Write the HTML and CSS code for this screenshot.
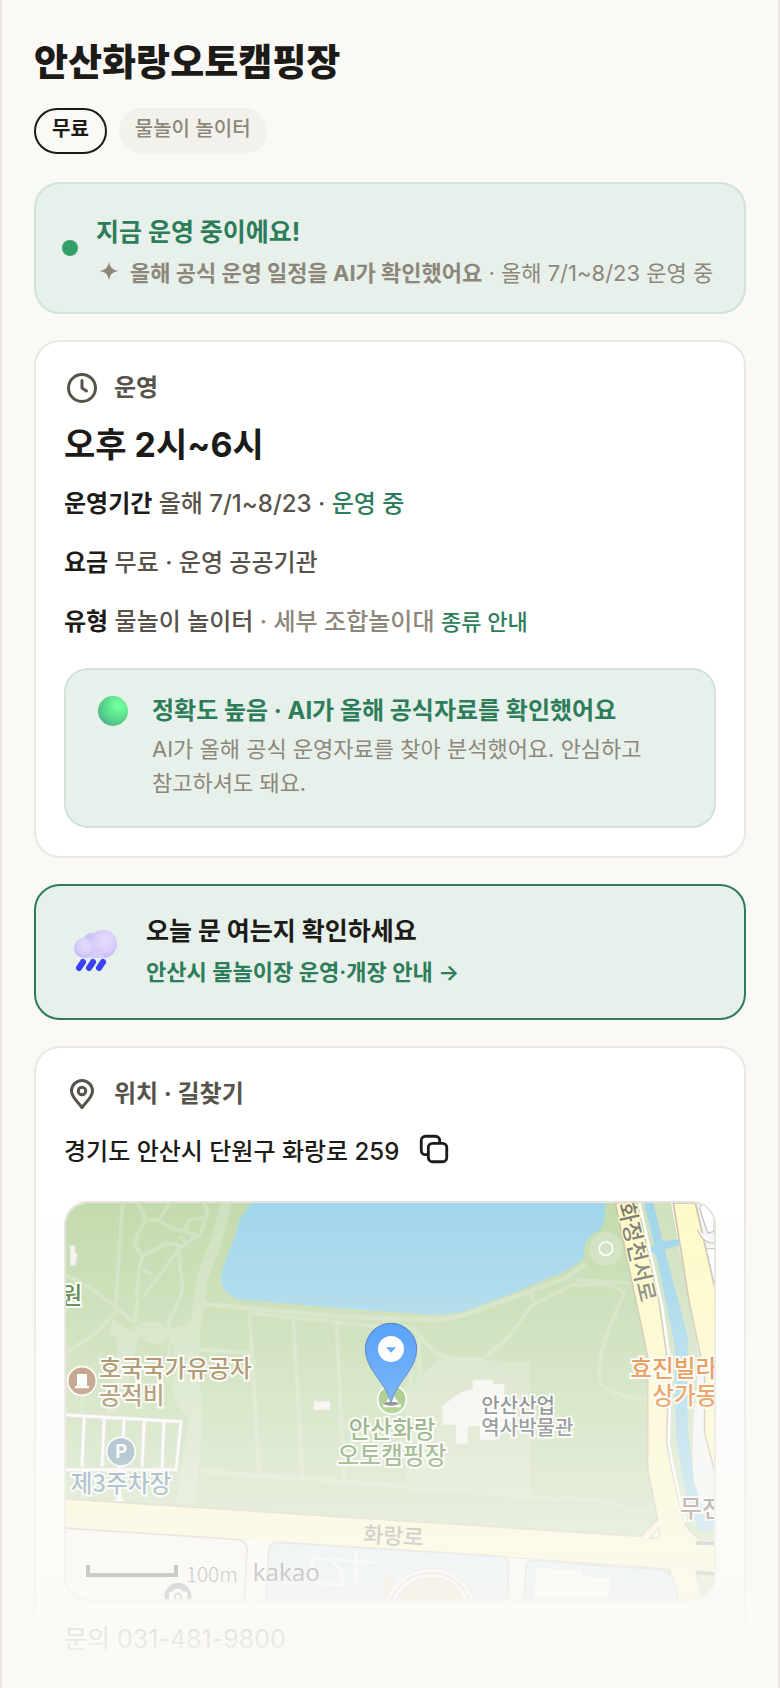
FILE: index.html
```html
<!DOCTYPE html>
<html lang="ko">
<head>
    <meta charset="UTF-8">
    <meta name="viewport" content="width=device-width, initial-scale=1.0">
    <title>안산화랑오토캠핑장</title>
    <link rel="stylesheet" href="styles.css">
</head>
<body>
<main class="page">
    <h1>안산화랑오토캠핑장</h1>
    <div class="tags">
        <span class="tag tag-free">무료</span>
        <span class="tag">물놀이 놀이터</span>
    </div>

    <section class="card status">
        <span class="dot"></span>
        <div class="status-text">
            <h2>지금 운영 중이에요!</h2>
            <p class="ai-line">
                <svg class="spark" viewBox="0 0 24 24"><path d="M12 2Q13 11 22 12Q13 13 12 22Q11 13 2 12Q11 11 12 2Z" fill="#8d877b"/></svg>
                <span><b>올해 공식 운영 일정을 AI가 확인했어요</b> · 올해 7/1~8/23 운영 중</span>
            </p>
        </div>
    </section>

    <section class="card">
        <h2 class="card-title">
            <svg class="icon" viewBox="0 0 24 24"><circle cx="12" cy="12" r="9"/><path d="M12 7v5l3 2"/></svg>
            운영
        </h2>
        <p class="hours">오후 2시~6시</p>
        <p class="row"><b>운영기간</b> 올해 7/1~8/23 · <span class="green">운영 중</span></p>
        <p class="row"><b>요금</b> 무료 · 운영 공공기관</p>
        <p class="row"><b>유형</b> 물놀이 놀이터 <span class="muted">· 세부 조합놀이대</span> <a class="kinds" href="#">종류 안내</a></p>

        <div class="accuracy">
            <span class="ball"></span>
            <div>
                <h3>정확도 높음 · AI가 올해 공식자료를 확인했어요</h3>
                <p>AI가 올해 공식 운영자료를 찾아 분석했어요. 안심하고 참고하셔도 돼요.</p>
            </div>
        </div>
    </section>

    <a class="card notice" href="#">
        <svg class="cloud" viewBox="0 0 48 48">
            <defs>
                <radialGradient id="puff" cx="55%" cy="40%" r="60%">
                    <stop offset="0" stop-color="#e6dcfb"/>
                    <stop offset=".6" stop-color="#d9d0fb"/>
                    <stop offset="1" stop-color="#c2b8f8"/>
                </radialGradient>
            </defs>
            <circle cx="19" cy="12" r="7" fill="#cbc2fa"/>
            <circle cx="31" cy="16" r="14" fill="url(#puff)"/>
            <path d="M12 20h20v10H12z" fill="#d6cdfb"/>
            <circle cx="12" cy="20" r="10" fill="url(#puff)"/>
            <g stroke="#3b41f8" stroke-width="6" stroke-linecap="round">
                <path d="M11 34l-4 6"/><path d="M21 34l-4 6"/><path d="M31 34l-4 6"/>
            </g>
        </svg>
        <span class="notice-text">
            <strong>오늘 문 여는지 확인하세요</strong>
            <span>안산시 물놀이장 운영·개장 안내 →</span>
        </span>
    </a>

    <section class="card location">
        <h2 class="card-title">
            <svg class="icon" viewBox="0 0 24 24"><path d="M12 21C9 17 5 14 5 10a7 7 0 0 1 14 0C19 14 15 17 12 21z"/><circle cx="12" cy="10" r="2.5"/></svg>
            위치 · 길찾기
        </h2>
        <div class="address">
            <span>경기도 안산시 단원구 화랑로 259</span>
            <button class="copy" type="button" aria-label="주소 복사">
                <svg viewBox="0 0 24 24"><rect x="8" y="8" width="13" height="13" rx="3"/><path d="M8 16H6a3 3 0 0 1-3-3V6a3 3 0 0 1 3-3h7a3 3 0 0 1 3 3v2"/></svg>
            </button>
        </div>

        <div class="map">
            <svg viewBox="0 0 1944 1188" preserveAspectRatio="xMidYMid slice">
                <rect width="1944" height="1188" fill="#c3dbae"/>

                <!-- park blocks and paths -->
                <path d="M1120 464L1392 480V880L1020 860V560Z" fill="#cfe0be"/>
                <path d="M140 345Q200 400 205 370Q255 335 300 372Q340 380 400 340V440Q400 520 410 640L390 900H330L370 640Q310 610 320 500Q330 430 310 405Q260 440 220 400L200 470Q190 560 150 630H120Q170 500 150 400H130Z" fill="#cfe1bf"/>
                <circle cx="1620" cy="137" r="50" fill="#cfe1bf"/>
                <g fill="none" stroke="#cfe1bf" stroke-width="12" stroke-linejoin="round">
                    <path d="M170 0L148 320"/>
                    <path d="M0 218Q70 240 198 355"/>
                    <path d="M0 450L90 390L150 325"/>
                    <path d="M215 0Q250 50 225 75Q190 120 230 160Q210 220 215 290L205 360"/>
                    <path d="M235 50H280L310 0M280 50Q300 75 355 85L370 50L420 45Q430 20 410 0M355 85L400 100L420 45M360 115L340 100M230 160L300 120Q340 120 340 135L400 95"/>
                    <path d="M345 130L230 285M230 200L260 215M340 135Q340 200 350 240Q350 280 310 350V380"/>
                    <path d="M320 400Q300 440 310 520M50 570L45 640" stroke-width="8"/>
                    <path d="M400 302L822 340L1120 352L1200 335L1500 225L1560 180" stroke-width="14"/>
                    <path d="M550 330L910 368L1040 372Q1100 460 1160 468H1250L1330 400L1400 305"/>
                    <path d="M1400 305L1520 245H1630L1675 268L1620 400Q1595 480 1600 530Q1620 585 1770 590M1395 270L1405 305M1530 230L1720 242"/>
                    <path d="M550 330L580 820M682 350L710 830M812 365L835 860"/>
                    <path d="M400 440L560 450M410 805L1020 850L1460 888Q1600 880 1690 920L1770 918"/>
                    <path d="M1035 440V840M1060 400V840"/>
                </g>
                <path d="M480 0Q460 100 410 220L385 400" fill="none" stroke="#cfe1bf" stroke-width="34"/>

                <!-- lake -->
                <path d="M557 0L520 50Q510 100 492 138L465 210Q458 270 522 290L822 316L1032 330Q1120 340 1182 328Q1340 275 1452 223Q1520 200 1554 163Q1550 100 1602 83Q1620 60 1617 0Z" fill="#a2d6eb"/>
                <circle cx="1620" cy="137" r="20" fill="#cfe1bf" stroke="#fff" stroke-width="5"/>

                <!-- parking lot and buildings -->
                <g fill="none" stroke="#e1dddc" stroke-width="13">
                    <path d="M0 636L345 656L330 800H0M55 640L48 790M115 645L108 790M174 648L168 790M235 650L228 790M294 655L288 795"/>
                </g>
                <g fill="none" stroke="#fff" stroke-width="7">
                    <path d="M0 636L345 656L330 800H0M55 640L48 790M115 645L108 790M174 648L168 790M235 650L228 790M294 655L288 795"/>
                </g>
                <path d="M12 128H28V150L35 155L28 188H12ZM743 594H793V621H743Z" fill="#f3f5f0" stroke="#ddd8d8" stroke-width="3"/>
                <path d="M1130 608L1180 570L1220 558V530H1282V543H1315V590L1340 615V650L1290 710H1242V670H1205V722H1170V665H1130Z" fill="#f3f6f0"/>

                <!-- riverside roads -->
                <path d="M1720 0L1810 440V700L1840 900L1900 980H1944V0Z" fill="#cfe1bf"/>
                <path d="M1815 0L1900 470L1880 680V860Q1900 960 1944 980V0Z" fill="#f6f5f5"/>
                <path d="M1735 0H1762L1790 115L1843 108V125L1796 140L1865 400V680L1885 840L1920 940L1944 950V985H1900L1860 880L1830 700L1825 420L1770 155L1745 140L1765 125Z" fill="#a0d5eb"/>
                <path d="M1822 0H1888L1950 270V820L1916 690V520L1870 300Z" fill="#fefac9" stroke="#cbc2ae" stroke-width="5"/>
                <path d="M1900 15L1925 90L1944 86V30L1910 0ZM1895 80Q1910 120 1944 120M1944 137H1920L1944 240" fill="#fff" stroke="#c8c3bd" stroke-width="4"/>
                <path d="M1648 0H1715L1780 300L1808 500L1802 720Q1830 870 1860 970L1900 1010H1950V1110H1890L1910 1194H1840L1810 1100L1700 1090L-6 975V887L1725 1000L1775 950L1745 800V460Z" fill="#fefac9" stroke="#cbc2ae" stroke-width="5"/>
                <path d="M1720 0L1788 310L1815 500L1808 720Q1830 850 1860 960" fill="none" stroke="#fff" stroke-width="8"/>
                <path d="M154 790H166V884L174 894H142L154 884Z" fill="#fff"/>

                <!-- blocks below the road -->
                <path d="M0 972L1700 1090V1188H0Z" fill="#fdfcfc"/>
                <path d="M-6 975L520 1010Q545 1020 543 1040L535 1194H-6Z" fill="#fbf9f9" stroke="#cbc2ae" stroke-width="5"/>
                <path d="M600 1194L608 1040Q612 1018 640 1018L1305 1060Q1328 1062 1328 1085L1324 1194Z" fill="#d9eaf5" stroke="#c7c6c4" stroke-width="5"/>
                <path d="M1374 1194L1380 1090Q1385 1068 1410 1072L1780 1100Q1815 1105 1825 1140L1840 1194Z" fill="#d9eaf5" stroke="#c7c6c4" stroke-width="5"/>
                <path d="M1410 1096L1548 1102V1120L1632 1126L1628 1188H1405Z" fill="#fff"/>
                <path d="M738 1065L795 1070L828 1105V1145L760 1142L735 1120ZM812 1070L924 1078M870 1045V1148" fill="none" stroke="#fff" stroke-width="7"/>
                <path d="M955 1188V1120H985V1150Q1030 1095 1100 1094Q1190 1100 1225 1188Z" fill="#edd5c8"/>
                <path d="M965 1188Q1010 1102 1098 1102Q1180 1104 1218 1188M985 1188Q1020 1118 1098 1118Q1170 1120 1200 1188" fill="none" stroke="#fff" stroke-width="7"/>
                <path d="M1752 1005L1778 975Q1785 1000 1776 1005Z" fill="#fff" stroke="#cbc2ae" stroke-width="4"/>
                <path d="M1890 1019L1944 1022M1890 1108L1944 1112" stroke="#999" stroke-width="11"/>

                <!-- place marks -->
                <g stroke="#fff" stroke-width="5">
                    <circle cx="48" cy="534" r="43" fill="#aa7d5c"/>
                    <circle cx="165" cy="746" r="43" fill="#7398ad"/>
                    <circle cx="336" cy="1180" r="43" fill="#66757d"/>
                    <circle cx="978" cy="590" r="43" fill="#83b658"/>
                </g>
                <path d="M33 513H63V549H69V556H27V549H33Z" fill="#fff"/>
                <path d="M310 1166H320L326 1158H346L352 1166H364V1188H310Z" fill="#fff"/>
                <circle cx="336" cy="1181" r="10" fill="none" stroke="#66757d" stroke-width="5"/>
                <path d="M978 570L1000 604H1004V613H952V604H956Z" fill="#fff"/>
                <ellipse cx="976" cy="602" rx="22" ry="6" fill="#555"/>
                <path d="M975 600Q966 565 930 518Q898 475 898 438A77 77 0 0 1 1052 438Q1052 475 1020 518Q984 565 975 600Z" fill="#2587fb" stroke="#2158b4" stroke-width="3"/>
                <circle cx="975" cy="438" r="39" fill="#fff"/>
                <path d="M960 433H990L975 449Z" fill="#2587fb"/>

                <g class="labels">
                    <text x="100" y="522" fill="#8c6d36">호국국가유공자</text>
                    <text x="100" y="602" fill="#8c6d36">공적비</text>
                    <text x="49" y="303" fill="#4c7a34" text-anchor="end">원</text>
                    <text x="978" y="705" fill="#52833c" text-anchor="middle">안산화랑</text>
                    <text x="978" y="783" fill="#52833c" text-anchor="middle">오토캠핑장</text>
                    <text class="small" x="1246" y="630" fill="#4d555c">안산산업</text>
                    <text class="small" x="1246" y="696" fill="#4d555c">역사박물관</text>
                    <text x="1693" y="522" fill="#e27518">효진빌라</text>
                    <text x="1759" y="602" fill="#e27518">상가동</text>
                    <text x="14" y="866" fill="#527f99">제3주차장</text>
                    <text x="1842" y="943" fill="#705448">무진</text>
                    <text class="parking" x="165" y="766" text-anchor="middle">P</text>
                </g>
                <g class="road-names">
                    <text x="890" y="1018" transform="rotate(3 890 1018)">화랑로</text>
                    <text x="1656" y="4" transform="rotate(77 1656 4)">화정천서로</text>
                </g>
                <path d="M66 1086V1116H330V1086" fill="none" stroke="#333" stroke-width="12"/>
                <text class="scale" x="360" y="1138">100m</text>
                <text class="brand" x="560" y="1133">kakao</text>
            </svg>
        </div>
        <p class="phone">문의 031-481-9800</p>
    </section>
    <div class="fade"></div>
</main>
</body>
</html>
```
FILE: styles.css
```css
* {
    box-sizing: border-box;
}

body {
    margin: 0;
    background: #faf9f5;
    color: #1c1b18;
    font-family: Inter, "Noto Sans CJK KR", sans-serif;
    font-size: 24px;
    line-height: 36px;
    word-break: keep-all;
}

h1, h2, h3, p {
    margin: 0;
}

a {
    color: inherit;
    text-decoration: none;
}

.page {
    position: relative;
    height: 100vh;
    overflow: hidden;
    padding: 37px 32px 0;
    border: solid #e9e7df;
    border-width: 0 2px;
}

h1 {
    font-size: 37px;
    font-weight: 800;
    line-height: 52px;
}

/* Tags */
.tags {
    display: flex;
    gap: 12px;
    margin: 19px 0 28px;
}

.tag {
    height: 46px;
    padding: 0 16px;
    border-radius: 23px;
    background: #f3f1ec;
    color: #8d877b;
    font-size: 20px;
    font-weight: 500;
    line-height: 42px;
}

.tag-free {
    border: 2px solid #1c1b18;
    background: transparent;
    color: #1c1b18;
    font-weight: 700;
    line-height: 38px;
}

/* Cards */
.card {
    display: block;
    margin-bottom: 26px;
    padding: 28px;
    border: 2px solid #eae8e1;
    border-radius: 26px;
    background: #fff;
}

.card-title {
    display: flex;
    align-items: center;
    gap: 14px;
    color: #57534a;
    font-size: 24px;
}

.icon {
    width: 36px;
    height: 36px;
    fill: none;
    stroke: #57534a;
    stroke-width: 2;
    stroke-linecap: round;
    stroke-linejoin: round;
}

/* Status */
.status {
    display: flex;
    align-items: center;
    gap: 18px;
    height: 132px;
    padding: 0 26px;
    border-color: #cfe4d8;
    background: #e7f0ea;
}

.status-text {
    padding-top: 10px;
}

.dot {
    width: 16px;
    height: 16px;
    border-radius: 50%;
    background: #359f6a;
}

.status h2 {
    color: #2d7d5a;
    font-size: 25px;
    line-height: 40px;
}

.ai-line {
    display: flex;
    gap: 10px;
    color: #8d877b;
    font-size: 22px;
    line-height: 42px;
    white-space: nowrap;
}

.spark {
    width: 22px;
    height: 22px;
    margin: 8px 0 0 2px;
}

/* Hours */
.hours {
    margin: 14px 0 16px;
    font-size: 34px;
    font-weight: 700;
    line-height: 50px;
}

.row {
    margin-bottom: 23px;
    color: #57534a;
    font-weight: 500;
}

.row b {
    color: #1c1b18;
    font-weight: 700;
}

.row .green,
.kinds {
    color: #2d7d5a;
}

.row .muted {
    color: #8d877b;
}

.kinds {
    font-size: 22px;
}

.accuracy {
    display: flex;
    gap: 24px;
    margin-top: 28px;
    padding: 20px 32px 26px;
    border: 2px solid #cfe4d8;
    border-radius: 24px;
    background: #e7f0ea;
}

.ball {
    flex: none;
    width: 30px;
    height: 30px;
    margin-top: 6px;
    border-radius: 50%;
    background: radial-gradient(circle at 68% 32%, #70ff9d 10%, #57d287 55%, #4a98a0 100%);
}

.accuracy h3 {
    color: #2d7d5a;
    font-size: 24px;
    line-height: 42px;
}

.accuracy p {
    color: #8d877b;
    font-size: 22px;
    line-height: 34px;
}

/* Notice */
.notice {
    display: flex;
    align-items: center;
    gap: 26px;
    height: 136px;
    padding: 0 36px;
    border-color: #2d7d5a;
    background: #e7f0ea;
}

.cloud {
    width: 48px;
    height: 48px;
}

.notice-text {
    display: flex;
    flex-direction: column;
    color: #2d7d5a;
    font-size: 22px;
    font-weight: 600;
    line-height: 42px;
}

.notice-text strong {
    color: #1c1b18;
    font-size: 25px;
    font-weight: 700;
    line-height: 40px;
}

/* Location */
.location {
    padding-top: 28px;
}

.address {
    display: flex;
    gap: 18px;
    margin: 22px 0 31px;
    font-weight: 500;
}

.copy {
    height: 34px;
    padding: 0;
    border: 0;
    background: none;
}

.copy svg {
    display: block;
    width: 34px;
    height: 34px;
    margin-top: -4px;
    fill: none;
    stroke: #1c1b18;
    stroke-width: 2;
}

.map {
    aspect-ratio: 652 / 400;
    overflow: hidden;
    border: 2px solid #e5e3dc;
    border-radius: 24px;
}

.map svg {
    display: block;
    width: 100%;
    height: 100%;
}

.map text {
    font-family: "Noto Sans CJK KR", sans-serif;
    paint-order: stroke;
}

.labels text {
    font-size: 71px;
    font-weight: 500;
    stroke: #fff;
    stroke-width: 11px;
}

.labels .small {
    font-size: 60px;
}

.labels .parking {
    fill: #fff;
    stroke: none;
    font-size: 56px;
    font-weight: 700;
}

.road-names text {
    fill: #7c7a72;
    stroke: #fefac9;
    stroke-width: 8px;
    font-size: 66px;
    font-weight: 500;
}

.map .scale {
    fill: #333;
    font-size: 62px;
    font-weight: 300;
}

.map .brand {
    fill: #333;
    font-family: "Open Sans", sans-serif;
    font-size: 73px;
    font-weight: 500;
}

.phone {
    margin: 20px 0 80px;
    color: #57534a;
    font-size: 25px;
}

.fade {
    position: absolute;
    right: 0;
    bottom: 0;
    left: 0;
    height: 480px;
    background: linear-gradient(rgba(250, 249, 245, 0), #faf9f5);
    pointer-events: none;
}
```
